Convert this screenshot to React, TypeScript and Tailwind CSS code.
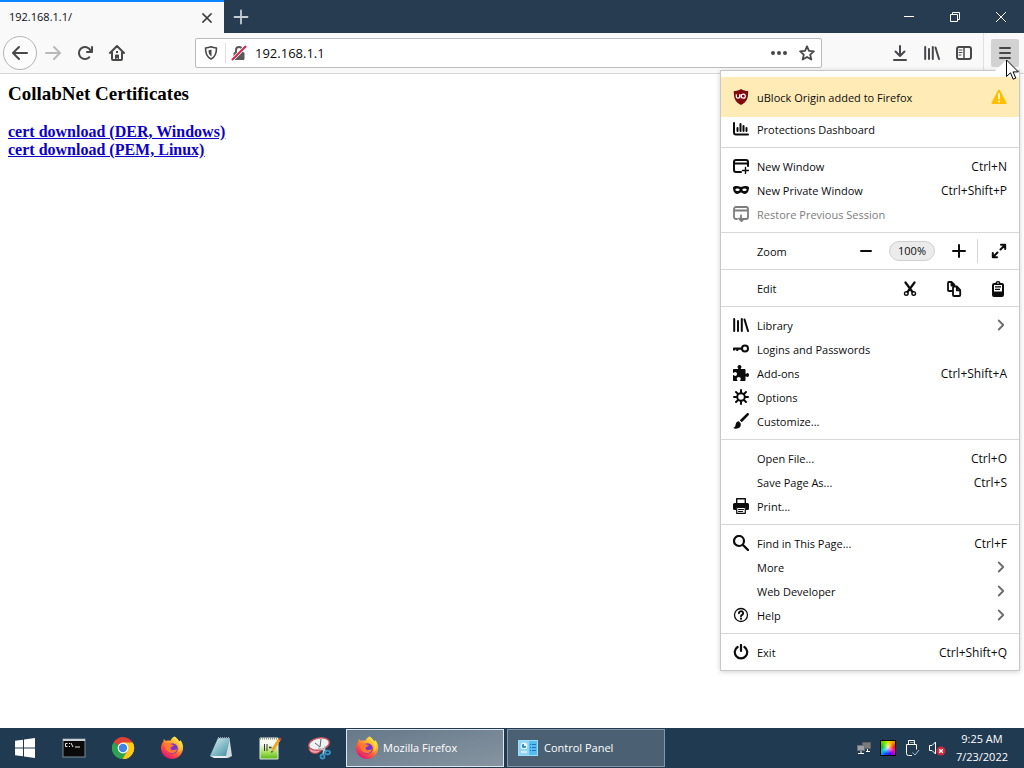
import type { ReactNode } from "react";

function Icon({ children, className = "size-4" }: { children: ReactNode; className?: string }) {
  return (
    <svg viewBox="0 0 16 16" className={`shrink-0 ${className}`} fill="currentColor" aria-hidden="true">
      {children}
    </svg>
  );
}

const stroke = { fill: "none", stroke: "currentColor", strokeWidth: 2, strokeLinecap: "round", strokeLinejoin: "round" } as const;

const BackIcon = () => (
  <Icon>
    <path d="M15 7H3.414l4.293-4.293a1 1 0 0 0-1.414-1.414l-6 6a1 1 0 0 0 0 1.414l6 6a1 1 0 0 0 1.414-1.414L3.414 9H15a1 1 0 0 0 0-2z" />
  </Icon>
);

const ForwardIcon = () => (
  <Icon>
    <path d="M15.707 7.293l-6-6a1 1 0 0 0-1.414 1.414L12.586 7H1a1 1 0 0 0 0 2h11.586l-4.293 4.293a1 1 0 1 0 1.414 1.414l6-6a1 1 0 0 0 0-1.414z" />
  </Icon>
);

const ReloadIcon = () => (
  <Icon>
    <path d="M15 1a1 1 0 0 0-1 1v2.418A6.995 6.995 0 1 0 8 15a6.954 6.954 0 0 0 4.95-2.05 1 1 0 0 0-1.414-1.414A5.019 5.019 0 1 1 12.549 6H10a1 1 0 0 0 0 2h5a1 1 0 0 0 1-1V2a1 1 0 0 0-1-1z" />
  </Icon>
);

const HomeIcon = () => (
  <Icon>
    <path d="M1 8l7-7 7 7M3 7.500V14a1 1 0 0 0 1 1h8a1 1 0 0 0 1-1V7.500" {...stroke} />
    <path d="M6 15v-4.500a1 1 0 0 1 1-1h2a1 1 0 0 1 1 1V15H8.700v-2H7.600v2z" />
    <rect x="7" y="6" width="2" height="2" />
  </Icon>
);

const ShieldIcon = () => (
  <Icon>
    <path d="M8 1.800c1.800.8 3.600 1.100 5.500 1.200 0 4.800-.8 8.900-5.500 11C3.300 11.900 2.500 7.800 2.500 3c1.900-.1 3.700-.4 5.500-1.200z" {...stroke} strokeWidth={1.600} />
    <path d="M8.500 4.500v7C6 10 5.600 8 5.500 5.200c1-.1 2-.3 3-.7z" />
  </Icon>
);

const InsecureLockIcon = () => (
  <Icon className="size-4 text-[#5a5a5c]">
    <path d="M5 8V5a3 3 0 0 1 6 0v3" {...stroke} />
    <rect x="2.500" y="7" width="11" height="8" rx="1.500" />
    <path d="M1.500 14.500l13-13" stroke="#fff" strokeWidth="3.600" />
    <path d="M1.500 14.500l13-13" stroke="#d7264c" strokeWidth="2" strokeLinecap="round" />
  </Icon>
);

const DotsIcon = () => (
  <Icon>
    <circle cx="2" cy="8" r="2" />
    <circle cx="8" cy="8" r="2" />
    <circle cx="14" cy="8" r="2" />
  </Icon>
);

const StarIcon = () => (
  <Icon>
    <path d="M8 1.300l2 4.500 4.900.5-3.700 3.300 1.100 4.900L8 12l-4.300 2.500 1.100-4.900L1.100 6.300 6 5.800z" {...stroke} strokeWidth={1.800} />
  </Icon>
);

const DownloadIcon = () => (
  <Icon>
    <path d="M8 1v10M3.500 6.500L8 11l4.500-4.500M2 15h12" {...stroke} />
  </Icon>
);

const LibraryIcon = () => (
  <Icon>
    <path d="M1.200 2v12M5 4v10M8.800 2v12M11.500 2.500L15 14" {...stroke} strokeWidth={2} />
  </Icon>
);

const SidebarIcon = () => (
  <Icon>
    <rect x="1" y="2" width="14" height="12" rx="2" {...stroke} />
    <path d="M8 2v12" {...stroke} strokeWidth={1.500} />
    <path d="M3 5h3M3 7.500h3M3 10h2" {...stroke} strokeWidth={1} />
  </Icon>
);

const MenuIcon = () => (
  <Icon>
    <path d="M3 3h10M3 8h10M3 13h10" {...stroke} />
  </Icon>
);

const DashboardIcon = () => (
  <Icon>
    <path d="M1 2v9.500a2 2 0 0 0 2 2h12" {...stroke} />
    <path d="M4.500 7v3M7.500 3v7M10.500 5v5M13.500 7v3" {...stroke} />
  </Icon>
);

const NewWindowIcon = () => (
  <Icon>
    <path d="M8 14H3a2 2 0 0 1-2-2V4a2 2 0 0 1 2-2h10a2 2 0 0 1 2 2v4M1 5.500h14" {...stroke} />
    <path d="M12.500 9.500v6M9.500 12.500h6" {...stroke} strokeWidth={1.400} />
  </Icon>
);

const MaskIcon = () => (
  <Icon>
    <path
      fillRule="evenodd"
      d="M4.200 4C2 3.700.500 4.500 0 5.300c0 3 1 6.700 4.200 6.700 1.800 0 2.600-1.600 3.800-1.600s2 1.600 3.800 1.600C15 12 16 8.300 16 5.300c-.5-.8-2-1.600-4.200-1.300-1.600.200-2.800.900-3.800.9S5.800 4.200 4.200 4zM4.600 9.100c-1.300 0-2.200-.8-2.400-1.300.3-.6 1.200-1.200 2.300-1.200 1.200 0 2 .7 2.200 1.200-.2.6-1 1.300-2.100 1.300zm6.800 0c-1.100 0-1.900-.7-2.100-1.300.2-.5 1-1.200 2.200-1.200 1.100 0 2 .6 2.300 1.200-.2.500-1.100 1.300-2.400 1.300z"
    />
  </Icon>
);

const RestoreIcon = () => (
  <Icon>
    <path d="M4 13H3a2 2 0 0 1-2-2V3a2 2 0 0 1 2-2h10a2 2 0 0 1 2 2v8a2 2 0 0 1-2 2H8V9.500M1 4.500h14" {...stroke} strokeWidth={1.800} />
    <path d="M6 12.500L8.500 15l2-2" {...stroke} strokeWidth={1.800} />
  </Icon>
);

const KeyIcon = () => (
  <Icon>
    <circle cx="12" cy="7.500" r="3" {...stroke} />
    <path d="M9 6.500H.800a.8.8 0 0 0-.8.8V9.500h2V8.800h1.300v1.200h2V8.800H9z" />
  </Icon>
);

const PuzzleIcon = () => (
  <Icon>
    <path d="M14.500 8c-.7 0-1 .8-1.500.8-.3 0-.5-.3-.5-.600V5c0-.6-.4-1-1-1H8.300c-.3 0-.6-.2-.6-.5 0-.5.800-.8.800-1.600C8.500.900 7.600 0 6.500 0s-2 .9-2 1.900c0 .8.800 1.100.8 1.600 0 .3-.3.5-.6.5H1c-.6 0-1 .4-1 1v2.300c0 .3.200.6.500.6.500 0 .8-.9 1.700-.9 1 0 1.800.9 1.800 2s-.8 2-1.800 2c-.9 0-1.200-.9-1.700-.9-.3 0-.5.300-.5.600V15c0 .6.400 1 1 1h3c.4 0 .6-.2.600-.5 0-.5-.8-.8-.8-1.600 0-1 .9-1.800 2-1.800s2 .8 2 1.800c0 .8-.8 1.100-.8 1.600 0 .3.300.5.600.5h3.900c.6 0 1-.4 1-1v-3.200c0-.3.200-.6.500-.6.500 0 .8.800 1.500.8.900 0 1.500-.9 1.500-2S15.400 8 14.500 8z" />
  </Icon>
);

const GearIcon = () => (
  <Icon>
    <circle cx="8" cy="8" r="3.800" {...stroke} />
    <path d="M8 1v2.500M8 12.500V15M1 8h2.500M12.500 8H15M3 3l1.800 1.800M11.200 11.200L13 13M3 13l1.800-1.800M11.200 4.800L13 3" {...stroke} />
  </Icon>
);

const BrushIcon = () => (
  <Icon>
    <path d="M15.600.400c-.5-.5-1.300-.5-1.900 0L6.800 7.200l2 2L15.600 2.300c.5-.6.5-1.400 0-1.900zM5.800 8.300C3 8.500 3 10.500 2.500 12.300 2.200 13.600 1.300 14.600.200 15c2.300 1.200 5.200.7 6.600-.8 1.100-1.200 1.100-2.800.9-3.900z" />
  </Icon>
);

const PrintIcon = () => (
  <Icon>
    <path d="M3.700 6V.700h8.600V6" {...stroke} strokeWidth={1.400} />
    <path d="M1.500 5h13A1.500 1.500 0 0 1 16 6.500v4a1.500 1.500 0 0 1-1.500 1.500H13V9.500H3V12H1.500A1.500 1.500 0 0 1 0 10.500v-4A1.500 1.500 0 0 1 1.500 5z" />
    <path d="M3.700 9.500h8.600v5.800H3.700zM5.500 11.500h5M5.500 13.500h4" {...stroke} strokeWidth={1.200} />
  </Icon>
);

const SearchIcon = () => (
  <Icon>
    <circle cx="6" cy="6" r="5" {...stroke} strokeWidth={2.200} />
    <path d="M10 10l5 5" {...stroke} strokeWidth={2.400} />
  </Icon>
);

const HelpIcon = () => (
  <Icon>
    <circle cx="8" cy="8" r="6.500" {...stroke} strokeWidth={1.300} />
    <path d="M5.900 6.200a2.100 2 0 1 1 3.200 1.700c-.7.400-1.100.7-1.100 1.400" {...stroke} strokeWidth={1.900} />
    <circle cx="8" cy="11.700" r="1.100" />
  </Icon>
);

const PowerIcon = () => (
  <Icon>
    <path d="M4.600 3a6.200 6.200 0 1 0 6.800 0M8 1v6" {...stroke} strokeWidth={2.200} />
  </Icon>
);

const MinusIcon = () => (
  <Icon>
    <path d="M3 8h10" {...stroke} />
  </Icon>
);

const PlusIcon = () => (
  <Icon>
    <path d="M2 8h12M8 2v12" {...stroke} />
  </Icon>
);

const FullscreenIcon = () => (
  <Icon>
    <path d="M9.500 6.500L14 2M10 1.800h4.200V6M6.500 9.500L2 14M6 14.200H1.800V10" {...stroke} />
  </Icon>
);

const CutIcon = () => (
  <Icon>
    <path d="M3.500 1.500L10.500 11M12.500 1.500L5.500 11" {...stroke} strokeWidth={2.200} />
    <circle cx="4.300" cy="12.400" r="1.800" {...stroke} strokeWidth={1.400} />
    <circle cx="11.700" cy="12.400" r="1.800" {...stroke} strokeWidth={1.400} />
  </Icon>
);

const CopyIcon = () => (
  <Icon>
    <path d="M6 10H3a1 1 0 0 1-1-1V2a1 1 0 0 1 1-1h2.500L8.500 4M5.500 1v3.500h2" {...stroke} strokeWidth={1.800} />
    <path d="M8 5.500h3L14.200 9v5a1 1 0 0 1-1 1H8a1 1 0 0 1-1-1V6.500a1 1 0 0 1 1-1zM10.800 5.800v3.500h3" {...stroke} strokeWidth={1.800} />
  </Icon>
);

const PasteIcon = () => (
  <Icon>
    <path d="M4 2h1.500a2.500 2 0 0 1 5 0H12a2 2 0 0 1 2 2v10a2 2 0 0 1-2 2H4a2 2 0 0 1-2-2V4a2 2 0 0 1 2-2z" />
    <path d="M4 4h8v6.500H4z" fill="#fff" />
    <path d="M5 5.800h6M5 8.300h5" stroke="#000" strokeWidth="1.200" />
    <circle cx="8" cy="2" r="0.800" fill="#fff" />
  </Icon>
);

const ChevronIcon = () => (
  <Icon className="size-3 text-[#6b6b6b]">
    <path d="M5 2l6 6-6 6" {...stroke} strokeWidth={2.400} />
  </Icon>
);

const UBlockIcon = () => (
  <svg viewBox="0 0 16 16" className="size-4 shrink-0" aria-hidden="true">
    <path d="M8 0c2.500 1.500 4.500 2 7.200 2 0 7-1 11-7.200 14C1.800 13 .800 9 .800 2 3.500 2 5.500 1.500 8 0z" fill="#800a0f" />
    <path d="M3.300 5.200v2.300a1.700 1.700 0 0 0 3.400 0V5.200M8.200 5.200v4" fill="none" stroke="#fff" strokeWidth="1.200" />
    <circle cx="10.300" cy="7.200" r="2" fill="none" stroke="#fff" strokeWidth="1.200" />
  </svg>
);

const WarningIcon = () => (
  <svg viewBox="0 0 16 16" className="size-4 shrink-0" aria-hidden="true">
    <path d="M8 1.500L14.500 14h-13z" fill="#ffbf00" stroke="#ffbf00" strokeWidth="2" strokeLinejoin="round" />
    <path d="M8 5v4.500" stroke="#fff3c4" strokeWidth="2" strokeLinecap="round" />
    <circle cx="8" cy="12.500" r="1.100" fill="#fff3c4" />
  </svg>
);

type Item = { label: string; icon?: ReactNode; keys?: string; sub?: boolean; disabled?: boolean };

function MenuRow({ label, icon, keys, sub, disabled }: Item) {
  return (
    <li>
      <button
        type="button"
        disabled={disabled}
        className="flex h-6 w-full items-center gap-2 px-3 text-left enabled:hover:bg-black/5 disabled:text-[#7d7d7d]"
      >
        <span className="flex size-4 items-center">{icon}</span>
        <span className="grow pt-0.5">{label}</span>
        {keys && <span className="pt-0.5 text-[12px]">{keys}</span>}
        {sub && <ChevronIcon />}
      </button>
    </li>
  );
}

function MenuGroup({ items }: { items: Item[] }) {
  return (
    <ul className="border-t border-[#d7d7db] py-1.5">
      {items.map((item) => (
        <MenuRow key={item.label} {...item} />
      ))}
    </ul>
  );
}

const windowItems: Item[] = [
  { label: "New Window", icon: <NewWindowIcon />, keys: "Ctrl+N" },
  { label: "New Private Window", icon: <MaskIcon />, keys: "Ctrl+Shift+P" },
  { label: "Restore Previous Session", icon: <RestoreIcon />, disabled: true },
];

const libraryItems: Item[] = [
  { label: "Library", icon: <LibraryIcon />, sub: true },
  { label: "Logins and Passwords", icon: <KeyIcon /> },
  { label: "Add-ons", icon: <PuzzleIcon />, keys: "Ctrl+Shift+A" },
  { label: "Options", icon: <GearIcon /> },
  { label: "Customize...", icon: <BrushIcon /> },
];

const fileItems: Item[] = [
  { label: "Open File...", keys: "Ctrl+O" },
  { label: "Save Page As...", keys: "Ctrl+S" },
  { label: "Print...", icon: <PrintIcon /> },
];

const toolItems: Item[] = [
  { label: "Find in This Page...", icon: <SearchIcon />, keys: "Ctrl+F" },
  { label: "More", sub: true },
  { label: "Web Developer", sub: true },
  { label: "Help", icon: <HelpIcon />, sub: true },
];

function AppMenu() {
  return (
    <div className="absolute top-[37px] right-1 z-10 w-[300px] border border-[#c8c8c9] bg-white pt-1.5 text-[11px] leading-4 text-[#0c0c0d] shadow-[0_1px_5px_rgba(0,0,0,0.18)]">
      <svg viewBox="0 0 20 10" className="absolute right-1 bottom-full h-2.5 w-5" aria-hidden="true">
        <path d="M0 10L10 0l10 10z" fill="#fff" />
      </svg>
      <button type="button" className="flex h-10 w-full items-center gap-2 bg-[#ffebb5] px-3 text-left">
        <UBlockIcon />
        <span className="grow pt-0.5">uBlock Origin added to Firefox</span>
        <WarningIcon />
      </button>
      <ul className="pb-1.5">
        <MenuRow label="Protections Dashboard" icon={<DashboardIcon />} />
      </ul>
      <MenuGroup items={windowItems} />
      <div className="flex items-center border-t border-[#d7d7db] py-1.5 pl-9">
        <span className="grow pt-0.5">Zoom</span>
        <button type="button" aria-label="Zoom out" className="flex h-6 w-11 items-center justify-center">
          <MinusIcon />
        </button>
        <button type="button" className="mx-px h-5 w-[46px] rounded-full border border-[#d0d0d0] bg-[#ebebeb]">
          100%
        </button>
        <button type="button" aria-label="Zoom in" className="flex h-6 w-[41px] items-center justify-center pl-1">
          <PlusIcon />
        </button>
        <button type="button" aria-label="Full screen" className="flex h-6 w-[42px] items-center justify-center border-l border-[#d7d7db]">
          <FullscreenIcon />
        </button>
      </div>
      <div className="flex items-center border-t border-[#d7d7db] py-1.5 pl-9">
        <span className="grow pt-0.5">Edit</span>
        <button type="button" aria-label="Cut" className="flex h-6 w-11 items-center justify-center pt-0.5 pl-0.5">
          <CutIcon />
        </button>
        <button type="button" aria-label="Copy" className="flex h-6 w-11 items-center justify-center pt-0.5 pl-0.5">
          <CopyIcon />
        </button>
        <button type="button" aria-label="Paste" className="flex h-6 w-11 items-center justify-center pt-0.5 pl-0.5">
          <PasteIcon />
        </button>
      </div>
      <MenuGroup items={libraryItems} />
      <MenuGroup items={fileItems} />
      <MenuGroup items={toolItems} />
      <MenuGroup items={[{ label: "Exit", icon: <PowerIcon />, keys: "Ctrl+Shift+Q" }]} />
      <svg viewBox="0 0 13 22" className="pointer-events-none absolute top-[-12px] right-0 h-[22px] w-[13px]" aria-hidden="true">
        <path d="M.500 1v16.500l4-3.700 2.700 6.400 2.600-1.100-2.700-6.200h5.300z" fill="#fff" stroke="#000" />
      </svg>
    </div>
  );
}

function ToolButton({ label, children, className = "" }: { label: string; children: ReactNode; className?: string }) {
  return (
    <button type="button" aria-label={label} className={`flex h-7 w-8 items-center justify-center ${className}`}>
      {children}
    </button>
  );
}

function TitleBar() {
  return (
    <header className="flex h-[33px] items-stretch bg-[#273c51]">
      <div className="flex w-56 items-center justify-between border-t-2 border-[#0a84ff] bg-[#f9f9fa] pr-[9px] pl-[9px]">
        <span className="text-[11px] text-[#0c0c0d]">192.168.1.1/</span>
        <button type="button" aria-label="Close tab" className="flex size-4 items-center justify-center text-[#3c3c3d]">
          <Icon className="size-3">
            <path d="M2.500 2.500l11 11M13.500 2.500l-11 11" {...stroke} />
          </Icon>
        </button>
      </div>
      <button type="button" aria-label="New tab" className="flex w-[34px] items-center justify-center text-[#c6ced6]">
        <Icon>
          <path d="M8 1.500v13M1.500 8h13" {...stroke} strokeWidth={1.800} />
        </Icon>
      </button>
      <div className="ml-auto flex text-white">
        <button type="button" aria-label="Minimize" className="flex w-[46px] items-center justify-center">
          <svg viewBox="0 0 10 10" className="size-2.5" fill="none" stroke="currentColor" aria-hidden="true">
            <path d="M0 4.500h10" />
          </svg>
        </button>
        <button type="button" aria-label="Restore" className="flex w-[46px] items-center justify-center">
          <svg viewBox="0 0 10 10" className="size-2.5" fill="none" stroke="currentColor" aria-hidden="true">
            <path d="M.500 2.500h7v7h-7zM2.500 2.500v-2h7v7h-2" />
          </svg>
        </button>
        <button type="button" aria-label="Close" className="flex w-[46px] items-center justify-center">
          <svg viewBox="0 0 10 10" className="size-2.5" fill="none" stroke="currentColor" aria-hidden="true">
            <path d="M0 0l10 10M10 0L0 10" />
          </svg>
        </button>
      </div>
    </header>
  );
}

function Toolbar() {
  return (
    <nav className="relative flex h-[41px] items-center border-b border-[#d5d5d6] bg-[#f9f9fa] pr-[5px] pl-[3px] text-[#48484a]">
      <button type="button" aria-label="Back" className="flex size-[34px] items-center justify-center rounded-full border border-[#b4b4b5] bg-[#fcfcfc]">
        <BackIcon />
      </button>
      <ToolButton label="Forward" className="text-[#b9b9ba]">
        <ForwardIcon />
      </ToolButton>
      <ToolButton label="Reload">
        <ReloadIcon />
      </ToolButton>
      <ToolButton label="Home">
        <HomeIcon />
      </ToolButton>
      <div className="mr-[62px] ml-[62px] flex h-[30px] grow items-center rounded-xs border border-[#bcbcbd] bg-white">
        <button type="button" aria-label="Tracking protection" className="flex h-5 w-[30px] items-center justify-center border-r border-[#dededf]">
          <ShieldIcon />
        </button>
        <button type="button" aria-label="Connection not secure" className="flex w-[26px] items-center justify-center">
          <InsecureLockIcon />
        </button>
        <input
          type="text"
          aria-label="Address"
          defaultValue="192.168.1.1"
          className="min-w-0 grow bg-transparent pt-0.5 pl-[3px] text-[13px] text-[#0c0c0d] outline-none"
        />
        <button type="button" aria-label="Page actions" className="flex w-7 items-center justify-center">
          <DotsIcon />
        </button>
        <button type="button" aria-label="Bookmark this page" className="flex w-7 items-center justify-center">
          <StarIcon />
        </button>
      </div>
      <ToolButton label="Downloads">
        <DownloadIcon />
      </ToolButton>
      <ToolButton label="Library">
        <LibraryIcon />
      </ToolButton>
      <ToolButton label="Sidebars">
        <SidebarIcon />
      </ToolButton>
      <div className="ml-[3px] flex h-full items-center border-l border-[#e0e0e1] pl-[7px]">
        <button type="button" aria-label="Open menu" className="flex size-7 items-center justify-center rounded-xs bg-[#d2d2d3]">
          <MenuIcon />
        </button>
      </div>
      <AppMenu />
    </nav>
  );
}

const WindowsLogo = () => (
  <svg viewBox="0 0 20 20" className="size-5" fill="#fff" aria-hidden="true">
    <path d="M0 2.800l8-1.100v7.800H0zM9 1.500L20 0v9.500H9zM0 10.500h8v7.800l-8-1.100zM9 10.500h11V20L9 18.500z" />
  </svg>
);

const TerminalLogo = () => (
  <svg viewBox="0 0 24 20" className="h-5 w-6" aria-hidden="true">
    <rect x="1" y="1" width="22" height="18" fill="#0a0a0a" stroke="#7f8a93" />
    <path d="M1 2h22" stroke="#c9d0d5" strokeWidth="2" />
    <path d="M5.500 5.500h-2v3h2M7.500 5v1M7.500 8v1M9 5l2 4M13 9h5" stroke="#e8e8e8" fill="none" />
  </svg>
);

const ChromeLogo = () => (
  <svg viewBox="0 0 24 24" className="size-6" aria-hidden="true">
    <path d="M12 12L2.500 6.400A11 11 0 0 1 21.500 6.500z" fill="#e24034" />
    <path d="M12 12L21.600 6.500A11 11 0 0 1 11.500 23z" fill="#fbc916" />
    <path d="M12 12l-.500 11A11 11 0 0 1 2.500 6.400z" fill="#2fa14f" />
    <path d="M12 6.500h9.600A11 11 0 0 1 11.500 23l5-8.500z" fill="#fbc916" />
    <path d="M7 14.500l5 3 4-2-4.500 7.500A11 11 0 0 1 2.500 6.400z" fill="#2fa14f" />
    <circle cx="12" cy="12" r="5.400" fill="#fff" />
    <circle cx="12" cy="12" r="4.200" fill="#4285e8" />
  </svg>
);

const FirefoxLogo = () => (
  <svg viewBox="0 0 24 24" className="size-6 shrink-0" aria-hidden="true">
    <defs>
      <linearGradient id="foxfire" x1="0.850" y1="0.050" x2="0.250" y2="0.950">
        <stop offset="0" stopColor="#fff04a" />
        <stop offset="0.350" stopColor="#ffb02e" />
        <stop offset="0.650" stopColor="#ff5a38" />
        <stop offset="1" stopColor="#e4127a" />
      </linearGradient>
    </defs>
    <path d="M14.500.500c2.500 1.500 3.800 3.400 4.500 5 1-.2 1.200-.9 1.200-1.500C22.500 6.500 23.500 9.500 23 13c-.8 5.800-5.500 10-11 10S1.500 18.800 1 13C.800 9.500 2 7 3.500 5.500l.2-2.500c1 .5 1.800 1.200 2.300 2 1.500-.6 3-.6 4.500-.200C11 3 12.500 1.500 14.500.500z" fill="url(#foxfire)" />
    <circle cx="12.500" cy="12.500" r="5.300" fill="#7a35c8" />
    <path d="M4 8c2-1.500 4.500-1.500 6.500 0 1 .8 2.200.6 3.500 1-.5 1.500-2.500 1.600-3.300 2.500-.5 1.500.7 3 2.800 2.600 1.500-.3 2.500-.9 3.500-.6-1 3-3.500 4-6 3.500C7 16 5 12 4 8z" fill="#ff7b34" />
    <path d="M14.500.500c.5 4 4 5 5 9 .6 3 0 5-1.500 7 2.500-1.500 4-5.500 3-9.500L20.200 4c0 .6-.2 1.300-1.200 1.500-.7-1.600-2-3.500-4.500-5z" fill="#ffdf45" />
  </svg>
);

const NotebookLogo = () => (
  <svg viewBox="0 0 24 24" className="size-6" aria-hidden="true">
    <defs>
      <linearGradient id="notes" x1="0" y1="0" x2="1" y2="1">
        <stop offset="0" stopColor="#dff2f5" />
        <stop offset="0.600" stopColor="#7ab5c2" />
        <stop offset="1" stopColor="#4a8b9c" />
      </linearGradient>
    </defs>
    <path d="M20.500 2.500L23 20l-4 2-3-2z" fill="#cfdde1" />
    <path d="M9 2h12l-4 18H1z" fill="url(#notes)" />
    <path d="M1 20h16l2 2H5z" fill="#e9eef0" />
    <path d="M9 2h12" stroke="#9aa7ad" strokeDasharray="1 1" strokeWidth="2" />
  </svg>
);

const EditorLogo = () => (
  <svg viewBox="0 0 24 24" className="size-6" aria-hidden="true">
    <defs>
      <linearGradient id="editor" x1="0" y1="0" x2="0" y2="1">
        <stop offset="0.300" stopColor="#f5f9ee" />
        <stop offset="0.700" stopColor="#a3df55" />
        <stop offset="1" stopColor="#5cb51c" />
      </linearGradient>
    </defs>
    <path d="M2 2h18v21H2z" fill="url(#editor)" stroke="#e7ecdf" />
    <path d="M2 2.500h17" stroke="#88938a" strokeDasharray="1 1" strokeWidth="2" />
    <path d="M6.500 8v7M9 8v7" stroke="#333" />
    <path d="M11 11.500h2.500M15 11.500h2" stroke="#333" strokeWidth="1.500" />
    <path d="M21.500 3L14.500 14.500" stroke="#eda52a" strokeWidth="3" />
    <path d="M21 2.500l2 1.300" stroke="#c9433d" strokeWidth="2.500" />
    <path d="M13 15l.5 2 2-1.500z" fill="#3a3a3a" />
  </svg>
);

const SnipLogo = () => (
  <svg viewBox="0 0 24 24" className="size-6" aria-hidden="true">
    <path d="M2 12c0 4 4 6.500 9 5l4-3z" fill="#e9a3a6" stroke="#c8404c" />
    <ellipse cx="12" cy="8" rx="10.500" ry="6" transform="rotate(-12 12 8)" fill="#eef1f2" stroke="#c8505a" strokeWidth="1.400" />
    <path d="M8 7l5 4M14 3l-1 8" stroke="#59636b" />
    <path d="M11 12l9 3M18 10l-2 8" stroke="#b9c8d0" strokeWidth="1.500" />
    <circle cx="15.500" cy="20.500" r="2" fill="none" stroke="#3994c4" strokeWidth="1.800" />
    <ellipse cx="20.500" cy="16.500" rx="2.500" ry="1.800" fill="none" stroke="#3994c4" strokeWidth="1.800" />
  </svg>
);

const PanelLogo = () => (
  <svg viewBox="0 0 20 16" className="h-4 w-5 shrink-0" aria-hidden="true">
    <rect x="0.500" y="0.500" width="19" height="15" fill="#57bdf0" stroke="#9adcf9" />
    <rect x="1" y="1" width="10" height="14" fill="#8fd3f5" />
    <circle cx="6" cy="6" r="3.300" fill="#fff" />
    <circle cx="6" cy="6" r="2.300" fill="#2f8fd0" />
    <path d="M6 6V2.700A3.300 3.300 0 0 1 9.300 6z" fill="#e9f6fd" />
    <path d="M3 12h6" stroke="#eaf6fc" strokeWidth="1.500" />
    <path d="M12 4.500h1M14 4.500h4M12 7.500h1M14 7.500h4M12 10.500h1M14 10.500h4" stroke="#1b77b8" strokeWidth="1.200" />
  </svg>
);

const NetworkIcon = () => (
  <svg viewBox="0 0 16 16" className="size-4" aria-hidden="true">
    <rect x="6.500" y="2.500" width="8" height="6" fill="#777b7e" stroke="#5b6166" />
    <rect x="1.500" y="5.500" width="7" height="5" fill="#9da0a2" stroke="#6c7276" />
    <path d="M5 11v2M2 13.500h6M11.500 9v2M10 11.500h4" stroke="#fff" />
  </svg>
);

const ColorIcon = () => (
  <span className="flex size-4 items-center justify-center bg-black">
    <span className="flex size-3.5 bg-[conic-gradient(#d4e800,#ff9a00,#ff1a00,#ff00b0,#4400ff,#0050ff,#00c8e0,#00c030,#60e000,#d4e800)]">
      <span className="grow bg-radial from-white/80 to-transparent to-60%" />
    </span>
  </span>
);

const UsbIcon = () => (
  <svg viewBox="0 0 16 18" className="h-[18px] w-4" fill="none" stroke="#fff" aria-hidden="true">
    <path d="M4.500 5.500v-4h6v4M7 3v1M9 3v1M8 16.500H4.500a2 2 0 0 1-2-2v-9h10v5" />
    <path d="M8.500 13.500l2.500 2.500 4-5" stroke="#a9c0cd" />
  </svg>
);

const MutedIcon = () => (
  <svg viewBox="0 0 18 16" className="h-4 w-[18px]" aria-hidden="true">
    <path d="M1.500 5.500H4L7.500 2v12L4 10.500H1.500z" fill="none" stroke="#fff" />
    <circle cx="13" cy="11" r="4.500" fill="#d02a3c" />
    <path d="M11.200 9.200l3.600 3.600M14.800 9.200l-3.600 3.600" stroke="#fff" strokeWidth="1.300" />
  </svg>
);

const launchers = [
  { label: "Start", logo: <WindowsLogo /> },
  { label: "Command Prompt", logo: <TerminalLogo /> },
  { label: "Chrome", logo: <ChromeLogo /> },
  { label: "Firefox", logo: <FirefoxLogo /> },
  { label: "Notepad", logo: <NotebookLogo /> },
  { label: "Notepad++", logo: <EditorLogo /> },
  { label: "Snipping Tool", logo: <SnipLogo /> },
];

function Taskbar() {
  return (
    <footer className="flex h-10 items-center bg-[#203a51] text-[11px] leading-[18px] text-white">
      <div className="flex h-full">
        {launchers.map(({ label, logo }) => (
          <button key={label} type="button" aria-label={label} className="flex w-[49px] items-center justify-center">
            {logo}
          </button>
        ))}
      </div>
      <div className="ml-[3px] flex gap-[3px]">
        <button type="button" className="flex h-[38px] w-[158px] items-center gap-1 border border-[#dfe5ea] bg-linear-to-br from-[#66798a] to-[#8694a0] pl-2 text-left">
          <FirefoxLogo />
          Mozilla Firefox
        </button>
        <button type="button" className="flex h-[38px] w-[158px] items-center gap-1.5 border border-[#8496a4] bg-[#4b6173] pl-2.5 text-left">
          <PanelLogo />
          Control Panel
        </button>
      </div>
      <div className="ml-auto flex items-center gap-2 pr-4">
        <NetworkIcon />
        <ColorIcon />
        <UsbIcon />
        <MutedIcon />
        <p className="ml-0.5 text-center">
          9:25 AM
          <br />
          7/23/2022
        </p>
      </div>
    </footer>
  );
}

export default function App() {
  return (
    <div className="flex min-h-screen flex-col bg-white font-['Open_Sans','Noto_Sans',sans-serif]">
      <TitleBar />
      <Toolbar />
      <main className="grow px-2 pt-[9px] font-['Liberation_Serif',serif] text-black">
        <h3 className="text-[19px] leading-[22px] font-bold">CollabNet Certificates</h3>
        <p className="mt-[18px] text-base leading-[18px] font-bold text-[#0c00c8] underline">
          <a href="#der">cert download (DER, Windows)</a>
          <br />
          <a href="#pem">cert download (PEM, Linux)</a>
        </p>
      </main>
      <Taskbar />
    </div>
  );
}
